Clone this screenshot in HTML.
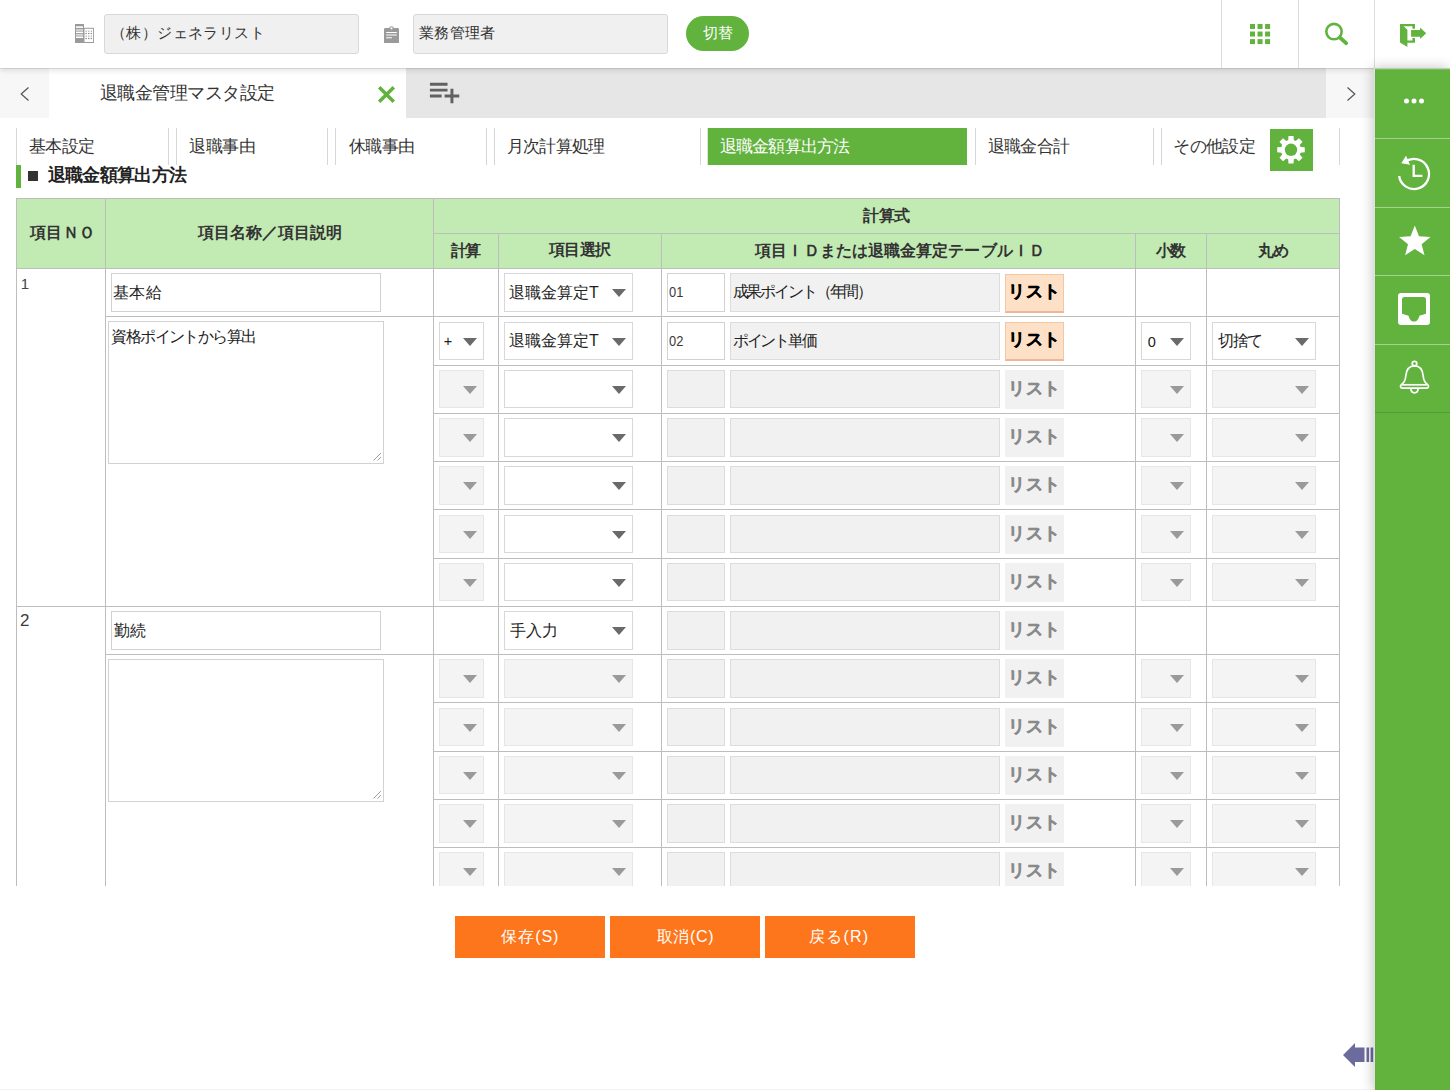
<!DOCTYPE html>
<html lang="ja">
<head>
<meta charset="utf-8">
<title>退職金管理マスタ設定</title>
<style>
*{box-sizing:border-box;margin:0;padding:0}
html,body{width:1450px;height:1090px;overflow:hidden;background:#fff}
body{position:relative;font-family:"Liberation Sans",sans-serif;color:#333;font-size:16px}
.ab{position:absolute}
.t{position:absolute;white-space:nowrap;line-height:1;color:#333}
.hd{position:absolute;left:0;top:0;width:1450px;height:68px;background:#fff;box-shadow:0 1px 0 rgba(0,0,0,.09),0 2px 6px rgba(0,0,0,.13);z-index:5}
.vl{position:absolute;top:0;width:1px;height:68px;background:#dcdcdc}
.box{position:absolute;top:14px;height:40px;width:255px;background:#f0f0f0;border:1px solid #d8d8d8;border-radius:3px}
.tb{position:absolute;left:0;top:68px;width:1375px;height:50px;background:#e6e6e6}
.side{position:absolute;left:1375px;top:68px;width:75px;height:1022px;background:#62b23e;box-shadow:inset 1px 0 0 #69a64c,-1px 0 0 #d4ecc8,-2px 0 12px rgba(0,0,0,.24);z-index:6}
.sd{position:absolute;left:0;width:75px;height:1px;background:rgba(255,255,255,.42)}
.sep{position:absolute;top:128px;width:1px;height:37px;background:#d6d6d6}
.th{position:absolute;background:#c2eab3;border:1px solid #bdbdbd}
.hl{position:absolute;background:#bdbdbd}
.inp{position:absolute;background:#fff;border:1px solid #d2d2d2}
.inp.dis{background:#f1f1f1;border-color:#dcdcdc}
.sel{position:absolute;background:#fff;border:1px solid #d8d8d8}
.sel i{position:absolute;right:5.7px;top:14.7px;width:0;height:0;border-left:7.2px solid transparent;border-right:7.2px solid transparent;border-top:8.2px solid #6a6a6a}
.sel.dis{background:#f4f4f4;border-color:#e6e6e6}
.sel.dis i{border-top-color:#9a9a9a}
.lb{position:absolute;width:59px;background:#fee0c6;border:1px solid #f3c6a6;border-bottom:2px solid #efb595}
.lb.dis{background:#f1f1f1;border:0}
.ob{position:absolute;top:916px;width:150px;height:42px;background:#fe761b}
</style>
</head>
<body>

<div class="hd">
<svg class="ab" style="left:75px;top:24px" width="19" height="19" viewBox="0 0 19 19"><rect x="0" y="0" width="9" height="19" fill="#9a9a9a"/><rect x="1" y="2.3" width="7" height="1.6" fill="#fff"/><rect x="1" y="5.3" width="7" height="1.4" fill="#e6e6e6"/><rect x="1" y="7.6" width="7" height="1.5" fill="#fff"/><rect x="1" y="10.2" width="7" height="1.4" fill="#e6e6e6"/><rect x="1" y="12.5" width="7" height="1.5" fill="#fff"/><rect x="9" y="4.3" width="9.6" height="14.2" fill="#fff" stroke="#9a9a9a" stroke-width="1"/><g fill="#b8b8b8"><rect x="10.6" y="6.4" width="1.2" height="1.8"/><rect x="13.2" y="6.4" width="1.2" height="1.8"/><rect x="15.8" y="6.4" width="1.2" height="1.8"/><rect x="10.6" y="11.4" width="1.2" height="1.8"/><rect x="13.2" y="11.4" width="1.2" height="1.8"/><rect x="15.8" y="11.4" width="1.2" height="1.8"/></g><g fill="#888"><rect x="10.4" y="9" width="1.4" height="1.1"/><rect x="13" y="9" width="1.4" height="1.1"/><rect x="15.6" y="9" width="1.4" height="1.1"/><rect x="10.4" y="14" width="1.4" height="1.1"/><rect x="13" y="14" width="1.4" height="1.1"/><rect x="15.6" y="14" width="1.4" height="1.1"/></g></svg>
<div class="box" style="left:104px"></div>
<div class="t" style="left:111.1px;top:24.6px;font-size:15px;letter-spacing:0.4px">（株）ジェネラリスト</div>
<svg class="ab" style="left:384px;top:24.6px" width="15" height="18.4" viewBox="0 0 15 18" preserveAspectRatio="none"><path fill="#9a9a9a" fill-rule="evenodd" d="M1.3 3H5a2.6 2.6 0 0 1 5 0h3.7A1.3 1.3 0 0 1 15 4.3v12.4A1.3 1.3 0 0 1 13.7 18H1.3A1.3 1.3 0 0 1 0 16.7V4.3A1.3 1.3 0 0 1 1.3 3zM7.5 2.1a1.1 1.1 0 1 0 0 2.2a1.1 1.1 0 0 0 0-2.2zM2.2 6.8v1.05h10.6V6.8zM2.2 9.3v1.05h10.6V9.3zM2.2 12v1.05h5.7V12z"/></svg>
<div class="box" style="left:413px"></div>
<div class="t" style="left:419.1px;top:24.8px;font-size:15px;letter-spacing:0.23px">業務管理者</div>
<div class="ab" style="left:686px;top:16px;width:63px;height:35px;border-radius:18px;background:#62b23e"></div>
<div class="t" style="left:702.5px;top:24.6px;font-size:15px;letter-spacing:0.7px;color:#fff">切替</div>
<div class="vl" style="left:1221px"></div>
<div class="vl" style="left:1298px"></div>
<div class="vl" style="left:1374px"></div>
<svg class="ab" style="left:1250px;top:24px" width="21" height="21" viewBox="0 0 21 21" fill="#62b23e"><rect x="0" y="0" width="5" height="5"/><rect x="7.55" y="0" width="5" height="5"/><rect x="15.1" y="0" width="5" height="5"/><rect x="0" y="7.55" width="5" height="5"/><rect x="7.55" y="7.55" width="5" height="5"/><rect x="15.1" y="7.55" width="5" height="5"/><rect x="0" y="15.1" width="5" height="5"/><rect x="7.55" y="15.1" width="5" height="5"/><rect x="15.1" y="15.1" width="5" height="5"/></svg>
<svg class="ab" style="left:1324px;top:22px" width="25" height="25" viewBox="0 0 25 25"><circle cx="10" cy="9.6" r="7.7" fill="none" stroke="#62b23e" stroke-width="2.6"/><path d="M16 15.6 L22.1 21.1" stroke="#62b23e" stroke-width="3.9" stroke-linecap="round"/></svg>
<svg class="ab" style="left:1399px;top:23px" width="29" height="25" viewBox="0 0 29 25"><path fill="#62b23e" d="M1 1H16V5.8H13.4V3.2H4.6L8.4 6.7V17.5H13.4V15.1H16V19.7H8.4V23.9L1 19.5Z"/><path fill="#62b23e" d="M12.1 7.05H21.1V4.5L27.2 10.3L21.1 16V13.7H12.1Z"/></svg>
</div>
<div class="tb">
<div class="ab" style="left:0;top:0;width:49px;height:50px;background:#f7f7f7"></div>
<svg class="ab" style="left:18px;top:17px" width="14" height="18" viewBox="0 0 14 18"><path d="M10.5 2.5 L3.2 9 L10.5 15.5" fill="none" stroke="#555" stroke-width="1.2"/></svg>
<div class="ab" style="left:49px;top:0;width:357px;height:50px;background:#fff"></div>
<div class="t" style="left:99.6px;top:16.2px;font-size:18px;letter-spacing:-0.48px">退職金管理マスタ設定</div>
<svg class="ab" style="left:376.3px;top:15.5px" width="21" height="21" viewBox="0 0 21 21"><path d="M3.2 3.2 L17.8 17.8 M17.8 3.2 L3.2 17.8" stroke="#62b23e" stroke-width="3.5" fill="none"/></svg>
<svg class="ab" style="left:427.2px;top:6.3px" width="35.2" height="35.2" viewBox="0 0 24 24"><path fill="#616161" d="M14 10H2v2h12v-2zm0-4H2v2h12V6zm4 8v-4h-2v4h-4v2h4v4h2v-4h4v-2h-4zM2 16h8v-2H2v2z"/></svg>
<div class="ab" style="left:1326px;top:0;width:49px;height:50px;background:#f7f7f7"></div>
<svg class="ab" style="left:1344px;top:17px" width="14" height="18" viewBox="0 0 14 18"><path d="M3.5 2.5 L10.8 9 L3.5 15.5" fill="none" stroke="#555" stroke-width="1.2"/></svg>
</div>
<div class="side">
<div class="ab" style="left:0;top:0;width:75px;height:2px;background:linear-gradient(rgba(222,222,222,.9),rgba(222,222,222,0))"></div>
<div class="sd" style="top:70px"></div>
<div class="sd" style="top:139px"></div>
<div class="sd" style="top:207px"></div>
<div class="sd" style="top:276px"></div>
<div class="sd" style="top:344px;background:rgba(0,0,0,.13)"></div>
<svg class="ab" style="left:27px;top:29px" width="24" height="8" viewBox="0 0 24 8" fill="#fff"><circle cx="4.5" cy="4" r="2.5"/><circle cx="12" cy="4" r="2.5"/><circle cx="19.5" cy="4" r="2.5"/></svg>
<svg class="ab" style="left:20px;top:85px" width="38" height="40" viewBox="0 0 38 40"><path d="M10.3 8.8 A15 15 0 1 1 4.15 23" fill="none" stroke="#fff" stroke-width="2.3"/><path d="M6.3 10.2 L11 2.7 L15 11.8 Z" fill="#fff"/><path d="M18.7 11.8 V22.8 H27.4" fill="none" stroke="#fff" stroke-width="2.3"/></svg>
<svg class="ab" style="left:23px;top:156px" width="34" height="34" viewBox="0 0 34 34"><path fill="#fff" d="M16.8 1.5 L21 12.2 L32.5 12.9 L23.6 20.2 L26.5 31.3 L16.8 25.1 L7.1 31.3 L10 20.2 L1.1 12.9 L12.6 12.2 Z"/></svg>
<svg class="ab" style="left:23px;top:225px" width="32" height="32" viewBox="0 0 32 32"><path fill="#fff" fill-rule="evenodd" d="M3 0h26a3 3 0 0 1 3 3v26a3 3 0 0 1-3 3H3a3 3 0 0 1-3-3V3a3 3 0 0 1 3-3zM6.5 4a2.5 2.5 0 0 0-2.5 2.5V20.8l6.6 1.9c.7 3.4 2.7 5.9 5.4 5.9s4.7-2.5 5.4-5.9l6.6-1.9V6.5A2.5 2.5 0 0 0 25.5 4z"/></svg>
<svg class="ab" style="left:24px;top:292px" width="31" height="36" viewBox="0 0 31 36"><g fill="none" stroke="#fff" stroke-width="1.7"><circle cx="15.5" cy="3.6" r="2.3"/><path d="M15.5 5.9 C9.5 5.9 7.3 10.5 6.8 16 C6.4 20.5 4 23.5 2.3 24.6 C1 25.5 1.3 28.2 3.2 28.2 H27.8 C29.7 28.2 30 25.5 28.7 24.6 C27 23.5 24.6 20.5 24.2 16 C23.7 10.5 21.5 5.9 15.5 5.9 Z"/><path d="M2.5 24.8 H28.5"/><path d="M11.8 28.4 C12 31.2 13.5 32.8 15.5 32.8 C17.5 32.8 19 31.2 19.2 28.4"/></g></svg>
</div>
<div class="sep" style="left:16px"></div><div class="sep" style="left:168px"></div>
<div class="t" style="left:29.2px;top:138px;font-size:16.5px;letter-spacing:-0.8px">基本設定</div>
<div class="sep" style="left:176px"></div><div class="sep" style="left:327px"></div>
<div class="t" style="left:189.2px;top:138px;font-size:16.5px;letter-spacing:-0.47px">退職事由</div>
<div class="sep" style="left:335px"></div><div class="sep" style="left:486px"></div>
<div class="t" style="left:349.2px;top:138px;font-size:16.5px;letter-spacing:-0.8px">休職事由</div>
<div class="sep" style="left:494px"></div><div class="sep" style="left:700px"></div>
<div class="t" style="left:507.2px;top:138px;font-size:16.5px;letter-spacing:-0.88px">月次計算処理</div>
<div class="ab" style="left:707px;top:128px;width:1px;height:37px;background:#d9e8d2"></div>
<div class="ab" style="left:708px;top:128px;width:259px;height:37px;background:#62b23e"></div>
<div class="t" style="left:720.2px;top:138px;font-size:16.5px;letter-spacing:-0.91px;color:#fff">退職金額算出方法</div>
<div class="sep" style="left:975px"></div><div class="sep" style="left:1153px"></div>
<div class="t" style="left:988.2px;top:138px;font-size:16.5px;letter-spacing:-0.85px">退職金合計</div>
<div class="sep" style="left:1161px"></div><div class="sep" style="left:1339px"></div>
<div class="t" style="left:1173.2px;top:137.5px;font-size:16.5px;letter-spacing:-0.6px">その他設定</div>
<svg class="ab" style="left:1270px;top:129px" width="43" height="42" viewBox="0 0 43 42"><rect width="43" height="42" fill="#62b23e"/><path fill="#fff" d="M18.14 11.63 L18.46 7.03 L23.54 7.03 L23.86 11.63 L25.46 12.3 L28.94 9.27 L32.53 12.86 L29.5 16.34 L30.17 17.94 L34.77 18.26 L34.77 23.34 L30.17 23.66 L29.5 25.26 L32.53 28.74 L28.94 32.33 L25.46 29.3 L23.86 29.97 L23.54 34.57 L18.46 34.57 L18.14 29.97 L16.54 29.3 L13.06 32.33 L9.47 28.74 L12.5 25.26 L11.83 23.66 L7.23 23.34 L7.23 18.26 L11.83 17.94 L12.5 16.34 L9.47 12.86 L13.06 9.27 L16.54 12.3 Z"/><circle cx="21" cy="20.8" r="10" fill="#fff"/><circle cx="21" cy="20.8" r="6.2" fill="#62b23e"/></svg>
<div class="ab" style="left:16px;top:165px;width:5px;height:23px;background:#62b23e"></div>
<div class="ab" style="left:28px;top:171px;width:10px;height:10px;background:#333"></div>
<div class="t" style="left:47.6px;top:166.9px;font-size:17.5px;letter-spacing:-0.67px;font-weight:bold;color:#222">退職金額算出方法</div>
<div class="ab" style="left:0;top:198px;width:1375px;height:688px;overflow:hidden">
<div class="th" style="left:16px;top:0px;width:90px;height:71px"></div>
<div class="t" style="left:29.75px;top:26.5px;font-size:16px;letter-spacing:0.5px;font-weight:bold">項目ＮＯ</div>
<div class="th" style="left:105px;top:0px;width:329px;height:71px"></div>
<div class="t" style="left:198.25px;top:27px;font-size:16px;letter-spacing:-0.06px;font-weight:bold">項目名称／項目説明</div>
<div class="th" style="left:433px;top:0px;width:907px;height:36px"></div>
<div class="t" style="left:863.25px;top:9.7px;font-size:16px;letter-spacing:-0.75px;font-weight:bold">計算式</div>
<div class="th" style="left:433px;top:35px;width:66px;height:36px"></div>
<div class="t" style="left:450.75px;top:44.7px;font-size:16px;letter-spacing:-1.5px;font-weight:bold">計算</div>
<div class="th" style="left:498px;top:35px;width:164px;height:36px"></div>
<div class="t" style="left:548.75px;top:44.2px;font-size:16px;letter-spacing:-0.5px;font-weight:bold">項目選択</div>
<div class="th" style="left:661px;top:35px;width:475px;height:36px"></div>
<div class="t" style="left:755.25px;top:44.7px;font-size:16px;letter-spacing:0.09px;font-weight:bold">項目ＩＤまたは退職金算定テーブルＩＤ</div>
<div class="th" style="left:1135px;top:35px;width:72px;height:36px"></div>
<div class="t" style="left:1155.75px;top:44.7px;font-size:16px;letter-spacing:-1.5px;font-weight:bold">小数</div>
<div class="th" style="left:1206px;top:35px;width:134px;height:36px"></div>
<div class="t" style="left:1257.75px;top:45.2px;font-size:16px;letter-spacing:-0.5px;font-weight:bold">丸め</div>
<div class="hl" style="left:16px;top:70px;width:1px;height:640px"></div>
<div class="hl" style="left:105px;top:70px;width:1px;height:640px"></div>
<div class="hl" style="left:433px;top:70px;width:1px;height:640px"></div>
<div class="hl" style="left:498px;top:70px;width:1px;height:640px"></div>
<div class="hl" style="left:661px;top:70px;width:1px;height:640px"></div>
<div class="hl" style="left:1135px;top:70px;width:1px;height:640px"></div>
<div class="hl" style="left:1206px;top:70px;width:1px;height:640px"></div>
<div class="hl" style="left:1339px;top:70px;width:1px;height:640px"></div>
<div class="hl" style="left:16px;top:70px;width:1324px;height:1px"></div>
<div class="t" style="left:20.8px;top:77.7px;font-size:15px;color:#444">1</div>
<div class="inp" style="left:111px;top:75px;width:270px;height:39px"></div>
<div class="t" style="left:112.9px;top:87.3px;font-size:16px;letter-spacing:0.45px;color:#222">基本給</div>
<div class="hl" style="left:105px;top:118px;width:1235px;height:1px"></div>
<div class="ab" style="left:108px;top:123px;width:276px;height:143px;border:1px solid #d2d2d2;background:#fff"><svg class="ab" style="right:1px;bottom:1px" width="11" height="11" viewBox="0 0 11 11"><path d="M9.6 2.4 L2.4 9.5 M9.6 6.5 L6.4 9.5" stroke="#666" stroke-width="1" stroke-dasharray="1 .4"/></svg></div>
<div class="t" style="left:111.1px;top:130.6px;font-size:16px;letter-spacing:-1.52px;color:#222">資格ポイントから算出</div>
<div class="sel" style="left:504px;top:75px;width:129px;height:39px"><i></i></div>
<div class="t" style="left:509px;top:87.05px;font-size:16px;letter-spacing:0.02px;color:#222">退職金算定T</div>
<div class="inp" style="left:667px;top:75px;width:58px;height:39px"></div>
<div class="t" style="left:668.8px;top:86.35px;font-size:15px;color:#3a3a3a;transform:scaleX(.86);transform-origin:0 0">01</div>
<div class="inp dis" style="left:730px;top:75px;width:270px;height:39px"></div>
<div class="t" style="left:732.6px;top:85.75px;font-size:16px;letter-spacing:-2.14px;color:#222">成果ポイント（年間）</div>
<div class="lb" style="left:1005px;top:76px;height:39px"></div>
<div class="t" style="left:1008.2px;top:84.75px;font-size:17px;letter-spacing:0.4px;font-weight:bold;color:#000;-webkit-text-stroke:.45px">リスト</div>
<div class="sel" style="left:439px;top:124px;width:45px;height:38px"><i></i></div>
<div class="t" style="left:443.8px;top:136.3px;font-size:14.5px;color:#222">+</div>
<div class="sel" style="left:504px;top:124px;width:129px;height:38px"><i></i></div>
<div class="t" style="left:509px;top:135.3px;font-size:16px;letter-spacing:0.02px;color:#222">退職金算定T</div>
<div class="inp" style="left:667px;top:124px;width:58px;height:38px"></div>
<div class="t" style="left:668.8px;top:134.6px;font-size:15px;color:#3a3a3a;transform:scaleX(.86);transform-origin:0 0">02</div>
<div class="inp dis" style="left:730px;top:124px;width:270px;height:38px"></div>
<div class="t" style="left:732.6px;top:134.5px;font-size:16px;letter-spacing:-2.06px;color:#222">ポイント単価</div>
<div class="lb" style="left:1005px;top:124px;height:39px"></div>
<div class="t" style="left:1008.2px;top:133px;font-size:17px;letter-spacing:0.4px;font-weight:bold;color:#000;-webkit-text-stroke:.45px">リスト</div>
<div class="sel" style="left:1141px;top:124px;width:50px;height:38px"><i></i></div>
<div class="t" style="left:1147.7px;top:136.8px;font-size:14.5px;color:#222">0</div>
<div class="sel" style="left:1212px;top:124px;width:104px;height:38px"><i></i></div>
<div class="t" style="left:1218px;top:135.3px;font-size:16px;letter-spacing:-1.5px;color:#222">切捨て</div>
<div class="hl" style="left:433px;top:167px;width:907px;height:1px"></div>
<div class="sel dis" style="left:439px;top:172px;width:45px;height:38px"><i></i></div>
<div class="sel" style="left:504px;top:172px;width:129px;height:38px"><i></i></div>
<div class="inp dis" style="left:667px;top:172px;width:58px;height:38px"></div>
<div class="inp dis" style="left:730px;top:172px;width:270px;height:38px"></div>
<div class="lb dis" style="left:1005px;top:172px;height:39px"></div>
<div class="t" style="left:1008.2px;top:181.75px;font-size:17px;letter-spacing:0.4px;font-weight:bold;color:#8a8a8a;-webkit-text-stroke:.45px">リスト</div>
<div class="sel dis" style="left:1141px;top:172px;width:50px;height:38px"><i></i></div>
<div class="sel dis" style="left:1212px;top:172px;width:104px;height:38px"><i></i></div>
<div class="hl" style="left:433px;top:215px;width:907px;height:1px"></div>
<div class="sel dis" style="left:439px;top:220px;width:45px;height:39px"><i></i></div>
<div class="sel" style="left:504px;top:220px;width:129px;height:39px"><i></i></div>
<div class="inp dis" style="left:667px;top:220px;width:58px;height:39px"></div>
<div class="inp dis" style="left:730px;top:220px;width:270px;height:39px"></div>
<div class="lb dis" style="left:1005px;top:220px;height:39px"></div>
<div class="t" style="left:1008.2px;top:230px;font-size:17px;letter-spacing:0.4px;font-weight:bold;color:#8a8a8a;-webkit-text-stroke:.45px">リスト</div>
<div class="sel dis" style="left:1141px;top:220px;width:50px;height:39px"><i></i></div>
<div class="sel dis" style="left:1212px;top:220px;width:104px;height:39px"><i></i></div>
<div class="hl" style="left:433px;top:263px;width:907px;height:1px"></div>
<div class="sel dis" style="left:439px;top:268px;width:45px;height:39px"><i></i></div>
<div class="sel" style="left:504px;top:268px;width:129px;height:39px"><i></i></div>
<div class="inp dis" style="left:667px;top:268px;width:58px;height:39px"></div>
<div class="inp dis" style="left:730px;top:268px;width:270px;height:39px"></div>
<div class="lb dis" style="left:1005px;top:268px;height:39px"></div>
<div class="t" style="left:1008.2px;top:278.25px;font-size:17px;letter-spacing:0.4px;font-weight:bold;color:#8a8a8a;-webkit-text-stroke:.45px">リスト</div>
<div class="sel dis" style="left:1141px;top:268px;width:50px;height:39px"><i></i></div>
<div class="sel dis" style="left:1212px;top:268px;width:104px;height:39px"><i></i></div>
<div class="hl" style="left:433px;top:311px;width:907px;height:1px"></div>
<div class="sel dis" style="left:439px;top:317px;width:45px;height:38px"><i></i></div>
<div class="sel" style="left:504px;top:317px;width:129px;height:38px"><i></i></div>
<div class="inp dis" style="left:667px;top:317px;width:58px;height:38px"></div>
<div class="inp dis" style="left:730px;top:317px;width:270px;height:38px"></div>
<div class="lb dis" style="left:1005px;top:317px;height:39px"></div>
<div class="t" style="left:1008.2px;top:326.5px;font-size:17px;letter-spacing:0.4px;font-weight:bold;color:#8a8a8a;-webkit-text-stroke:.45px">リスト</div>
<div class="sel dis" style="left:1141px;top:317px;width:50px;height:38px"><i></i></div>
<div class="sel dis" style="left:1212px;top:317px;width:104px;height:38px"><i></i></div>
<div class="hl" style="left:433px;top:360px;width:907px;height:1px"></div>
<div class="sel dis" style="left:439px;top:365px;width:45px;height:38px"><i></i></div>
<div class="sel" style="left:504px;top:365px;width:129px;height:38px"><i></i></div>
<div class="inp dis" style="left:667px;top:365px;width:58px;height:38px"></div>
<div class="inp dis" style="left:730px;top:365px;width:270px;height:38px"></div>
<div class="lb dis" style="left:1005px;top:365px;height:39px"></div>
<div class="t" style="left:1008.2px;top:374.75px;font-size:17px;letter-spacing:0.4px;font-weight:bold;color:#8a8a8a;-webkit-text-stroke:.45px">リスト</div>
<div class="sel dis" style="left:1141px;top:365px;width:50px;height:38px"><i></i></div>
<div class="sel dis" style="left:1212px;top:365px;width:104px;height:38px"><i></i></div>
<div class="hl" style="left:16px;top:408px;width:1324px;height:1px"></div>
<div class="t" style="left:19.9px;top:413.9px;font-size:17px;color:#3c3c3c">2</div>
<div class="inp" style="left:111px;top:413px;width:270px;height:39px"></div>
<div class="t" style="left:113.9px;top:425.3px;font-size:16px;letter-spacing:-0.1px;color:#222">勤続</div>
<div class="hl" style="left:105px;top:456px;width:1235px;height:1px"></div>
<div class="ab" style="left:108px;top:461px;width:276px;height:143px;border:1px solid #d2d2d2;background:#fff"><svg class="ab" style="right:1px;bottom:1px" width="11" height="11" viewBox="0 0 11 11"><path d="M9.6 2.4 L2.4 9.5 M9.6 6.5 L6.4 9.5" stroke="#666" stroke-width="1" stroke-dasharray="1 .4"/></svg></div>
<div class="sel" style="left:504px;top:413px;width:129px;height:39px"><i></i></div>
<div class="t" style="left:510px;top:424.8px;font-size:16px;color:#222">手入力</div>
<div class="inp dis" style="left:667px;top:413px;width:58px;height:39px"></div>
<div class="inp dis" style="left:730px;top:413px;width:270px;height:39px"></div>
<div class="lb dis" style="left:1005px;top:413px;height:39px"></div>
<div class="t" style="left:1008.2px;top:423px;font-size:17px;letter-spacing:0.4px;font-weight:bold;color:#8a8a8a;-webkit-text-stroke:.45px">リスト</div>
<div class="sel dis" style="left:439px;top:461px;width:45px;height:39px"><i></i></div>
<div class="sel dis" style="left:504px;top:461px;width:129px;height:39px"><i></i></div>
<div class="inp dis" style="left:667px;top:461px;width:58px;height:39px"></div>
<div class="inp dis" style="left:730px;top:461px;width:270px;height:39px"></div>
<div class="lb dis" style="left:1005px;top:461px;height:39px"></div>
<div class="t" style="left:1008.2px;top:471.25px;font-size:17px;letter-spacing:0.4px;font-weight:bold;color:#8a8a8a;-webkit-text-stroke:.45px">リスト</div>
<div class="sel dis" style="left:1141px;top:461px;width:50px;height:39px"><i></i></div>
<div class="sel dis" style="left:1212px;top:461px;width:104px;height:39px"><i></i></div>
<div class="hl" style="left:433px;top:504px;width:907px;height:1px"></div>
<div class="sel dis" style="left:439px;top:510px;width:45px;height:38px"><i></i></div>
<div class="sel dis" style="left:504px;top:510px;width:129px;height:38px"><i></i></div>
<div class="inp dis" style="left:667px;top:510px;width:58px;height:38px"></div>
<div class="inp dis" style="left:730px;top:510px;width:270px;height:38px"></div>
<div class="lb dis" style="left:1005px;top:510px;height:39px"></div>
<div class="t" style="left:1008.2px;top:519.5px;font-size:17px;letter-spacing:0.4px;font-weight:bold;color:#8a8a8a;-webkit-text-stroke:.45px">リスト</div>
<div class="sel dis" style="left:1141px;top:510px;width:50px;height:38px"><i></i></div>
<div class="sel dis" style="left:1212px;top:510px;width:104px;height:38px"><i></i></div>
<div class="hl" style="left:433px;top:553px;width:907px;height:1px"></div>
<div class="sel dis" style="left:439px;top:558px;width:45px;height:38px"><i></i></div>
<div class="sel dis" style="left:504px;top:558px;width:129px;height:38px"><i></i></div>
<div class="inp dis" style="left:667px;top:558px;width:58px;height:38px"></div>
<div class="inp dis" style="left:730px;top:558px;width:270px;height:38px"></div>
<div class="lb dis" style="left:1005px;top:558px;height:39px"></div>
<div class="t" style="left:1008.2px;top:567.75px;font-size:17px;letter-spacing:0.4px;font-weight:bold;color:#8a8a8a;-webkit-text-stroke:.45px">リスト</div>
<div class="sel dis" style="left:1141px;top:558px;width:50px;height:38px"><i></i></div>
<div class="sel dis" style="left:1212px;top:558px;width:104px;height:38px"><i></i></div>
<div class="hl" style="left:433px;top:601px;width:907px;height:1px"></div>
<div class="sel dis" style="left:439px;top:606px;width:45px;height:39px"><i></i></div>
<div class="sel dis" style="left:504px;top:606px;width:129px;height:39px"><i></i></div>
<div class="inp dis" style="left:667px;top:606px;width:58px;height:39px"></div>
<div class="inp dis" style="left:730px;top:606px;width:270px;height:39px"></div>
<div class="lb dis" style="left:1005px;top:606px;height:39px"></div>
<div class="t" style="left:1008.2px;top:616px;font-size:17px;letter-spacing:0.4px;font-weight:bold;color:#8a8a8a;-webkit-text-stroke:.45px">リスト</div>
<div class="sel dis" style="left:1141px;top:606px;width:50px;height:39px"><i></i></div>
<div class="sel dis" style="left:1212px;top:606px;width:104px;height:39px"><i></i></div>
<div class="hl" style="left:433px;top:649px;width:907px;height:1px"></div>
<div class="sel dis" style="left:439px;top:654px;width:45px;height:39px"><i></i></div>
<div class="sel dis" style="left:504px;top:654px;width:129px;height:39px"><i></i></div>
<div class="inp dis" style="left:667px;top:654px;width:58px;height:39px"></div>
<div class="inp dis" style="left:730px;top:654px;width:270px;height:39px"></div>
<div class="lb dis" style="left:1005px;top:654px;height:39px"></div>
<div class="t" style="left:1008.2px;top:664.25px;font-size:17px;letter-spacing:0.4px;font-weight:bold;color:#8a8a8a;-webkit-text-stroke:.45px">リスト</div>
<div class="sel dis" style="left:1141px;top:654px;width:50px;height:39px"><i></i></div>
<div class="sel dis" style="left:1212px;top:654px;width:104px;height:39px"><i></i></div>
<div class="hl" style="left:433px;top:697px;width:907px;height:1px"></div>
<div class="sel dis" style="left:439px;top:703px;width:45px;height:38px"><i></i></div>
<div class="sel dis" style="left:504px;top:703px;width:129px;height:38px"><i></i></div>
<div class="inp dis" style="left:667px;top:703px;width:58px;height:38px"></div>
<div class="inp dis" style="left:730px;top:703px;width:270px;height:38px"></div>
<div class="lb dis" style="left:1005px;top:703px;height:39px"></div>
<div class="t" style="left:1008.2px;top:712.5px;font-size:17px;letter-spacing:0.4px;font-weight:bold;color:#8a8a8a;-webkit-text-stroke:.45px">リスト</div>
<div class="sel dis" style="left:1141px;top:703px;width:50px;height:38px"><i></i></div>
<div class="sel dis" style="left:1212px;top:703px;width:104px;height:38px"><i></i></div>
</div>
<div class="ob" style="left:455px"></div>
<div class="t" style="left:501.3px;top:928.6px;font-size:16px;letter-spacing:0.95px;color:#fff">保存(S)</div>
<div class="ob" style="left:610px"></div>
<div class="t" style="left:656.6px;top:928.6px;font-size:16px;letter-spacing:0.7px;color:#fff">取消(C)</div>
<div class="ob" style="left:765px"></div>
<div class="t" style="left:809.3px;top:928.6px;font-size:16px;letter-spacing:1.15px;color:#fff">戻る(R)</div>
<svg class="ab" style="left:1343px;top:1043px" width="31" height="24" viewBox="0 0 31 24" fill="#6b6b9e"><path d="M0 12 L12 0 V4.5 H21.5 V19 H12 V24 Z"/><rect x="23.5" y="4.5" width="2.6" height="14.5"/><rect x="27.6" y="4.5" width="2.6" height="14.5"/></svg>
<div class="ab" style="left:0;top:1089px;width:1375px;height:1px;background:#f3f3f3"></div>
</body>
</html>
